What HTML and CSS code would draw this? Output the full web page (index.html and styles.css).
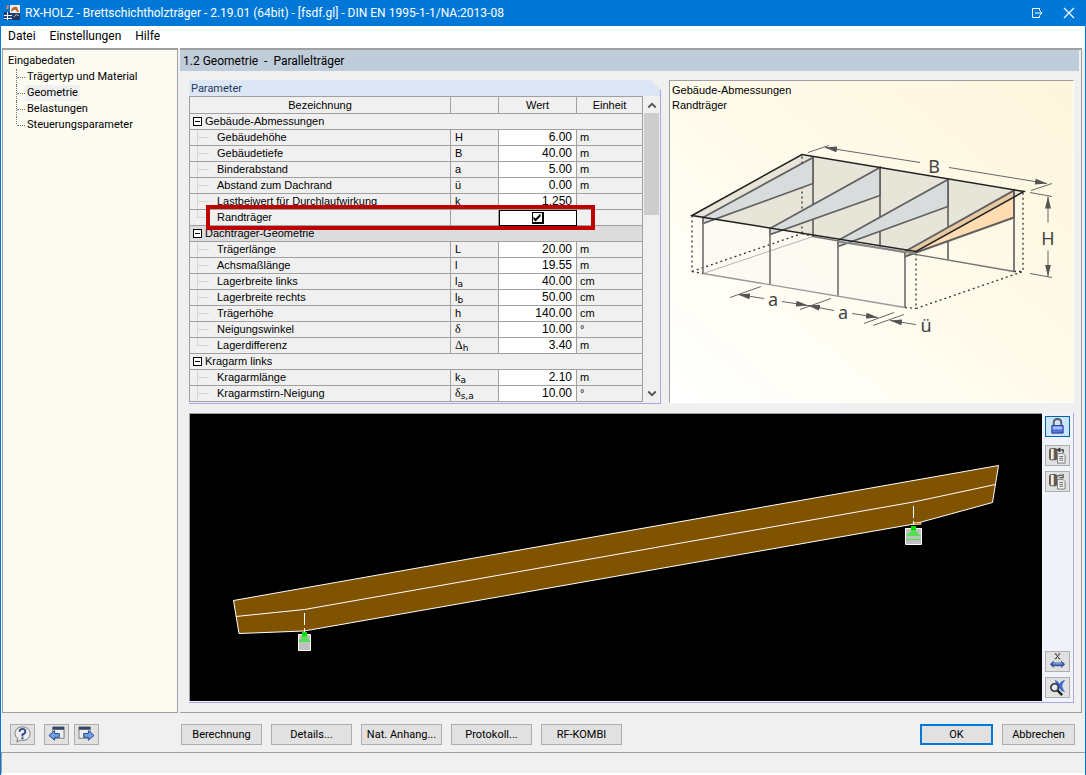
FILE: index.html
```html
<!DOCTYPE html>
<html lang="de">
<head>
<meta charset="utf-8">
<meta name="viewport" content="width=device-width, initial-scale=1">
<title>RX-HOLZ - Brettschichtholzträger</title>
<link rel="stylesheet" href="styles.css">
</head>
<body>
<div class="window">
  <header class="titlebar">
    <svg class="app-icon" viewBox="0 0 16 16" aria-hidden="true">
      <path d="M0 7h16v8H0z" fill="#1d3f78"/><path d="M6 0h10v8H6z" fill="#f6eee4"/><path d="M7 5q2-4 6-3l2 5h-2l-1-2H9L8 7z" fill="#b8663c"/>
      <path d="M2 0l3 1-1 3H2l1-2z" fill="#e38a4c"/><path d="M0 10.500h8M3.500 7v8M0 13.500h8" stroke="#fff" fill="none"/><path d="M9 9h7v6H9z" fill="#263554"/><path d="M10 12q2-4 5-1" stroke="#bdc8d8" fill="none"/>
    </svg>
    <h1 class="title">RX-HOLZ - Brettschichtholzträger - 2.19.01 (64bit) - [fsdf.gl] - DIN EN 1995-1-1/NA:2013-08</h1>
    <button class="title-button" type="button" aria-label="Andocken"><svg viewBox="0 0 12 12"><path d="M8.500 3.500v-2h-7v9h7v-2M4 6h7M9 4l2 2-2 2" fill="none" stroke="#fff"/></svg></button>
    <button class="title-button" type="button" aria-label="Schließen"><svg viewBox="0 0 12 12"><path d="M1 1l10 10M11 1L1 11" fill="none" stroke="#fff" stroke-width="1.2"/></svg></button>
  </header>
  <nav class="menubar" aria-label="Menü">
    <button type="button">Datei</button><button type="button">Einstellungen</button><button type="button">Hilfe</button>
  </nav>

  <div class="workspace">
    <nav class="sidebar" aria-label="Eingabedaten">
      <p class="tree-root">Eingabedaten</p>
      <ul class="tree">
        <li><a href="#traegertyp">Trägertyp und Material</a></li>
        <li><a href="#geometrie" class="current" aria-current="page">Geometrie</a></li>
        <li><a href="#belastungen">Belastungen</a></li>
        <li><a href="#steuerung">Steuerungsparameter</a></li>
      </ul>
    </nav>

    <main class="content" id="geometrie">
      <h2 class="page-heading">1.2 Geometrie&nbsp; -&nbsp; Parallelträger</h2>
      <div class="panels">
        <section class="parameters">
          <h3 class="panel-title">Parameter</h3>
          <div class="grid-frame">
            <table class="grid">
              <colgroup><col class="col-name"><col class="col-symbol"><col class="col-value"><col class="col-unit"></colgroup>
              <thead><tr><th scope="col">Bezeichnung</th><th scope="col" aria-label="Symbol"></th><th scope="col">Wert</th><th scope="col">Einheit</th></tr></thead>
              <tbody>
                <tr class="group"><th colspan="4" scope="rowgroup"><button class="toggle" type="button" aria-label="Gebäude-Abmessungen einklappen"></button>Gebäude-Abmessungen</th></tr>
                <tr><td>Gebäudehöhe</td><td>H</td><td>6.00</td><td>m</td></tr>
                <tr><td>Gebäudetiefe</td><td>B</td><td>40.00</td><td>m</td></tr>
                <tr><td>Binderabstand</td><td>a</td><td>5.00</td><td>m</td></tr>
                <tr><td>Abstand zum Dachrand</td><td>ü</td><td>0.00</td><td>m</td></tr>
                <tr><td>Lastbeiwert für Durchlaufwirkung</td><td>k</td><td>1.250</td><td></td></tr>
                <tr class="last"><td><label for="edge-beam">Randträger</label></td><td></td><td class="active"><input id="edge-beam" class="check" type="checkbox" checked></td><td></td></tr>
              </tbody>
              <tbody>
                <tr class="group shaded"><th colspan="4" scope="rowgroup"><button class="toggle" type="button" aria-label="Dachträger-Geometrie einklappen"></button>Dachträger-Geometrie</th></tr>
                <tr><td>Trägerlänge</td><td>L</td><td>20.00</td><td>m</td></tr>
                <tr><td>Achsmaßlänge</td><td>l</td><td>19.55</td><td>m</td></tr>
                <tr><td>Lagerbreite links</td><td>l<sub>a</sub></td><td>40.00</td><td>cm</td></tr>
                <tr><td>Lagerbreite rechts</td><td>l<sub>b</sub></td><td>50.00</td><td>cm</td></tr>
                <tr><td>Trägerhöhe</td><td>h</td><td>140.00</td><td>cm</td></tr>
                <tr><td>Neigungswinkel</td><td><span class="greek">δ</span></td><td>10.00</td><td>°</td></tr>
                <tr class="last"><td>Lagerdifferenz</td><td><span class="greek">Δ</span><sub>h</sub></td><td>3.40</td><td>m</td></tr>
              </tbody>
              <tbody>
                <tr class="group"><th colspan="4" scope="rowgroup"><button class="toggle" type="button" aria-label="Kragarm links einklappen"></button>Kragarm links</th></tr>
                <tr><td>Kragarmlänge</td><td>k<sub>a</sub></td><td>2.10</td><td>m</td></tr>
                <tr><td>Kragarmstirn-Neigung</td><td><span class="greek">δ</span><sub>s,a</sub></td><td>10.00</td><td>°</td></tr>
              </tbody>
            </table>
            <div class="scrollbar">
              <button type="button" aria-label="Nach oben"><svg viewBox="0 0 8 6"><path d="M1 5l3-3 3 3" fill="none" stroke="#555" stroke-width="1.500"/></svg></button>
              <div class="thumb"></div>
              <button type="button" aria-label="Nach unten"><svg viewBox="0 0 8 6"><path d="M1 1l3 3 3-3" fill="none" stroke="#555" stroke-width="1.500"/></svg></button>
            </div>
            <div class="highlight"></div>
          </div>
        </section>

        <section class="illustration">
          <p>Gebäude-Abmessungen<br>Randträger</p>
          <svg class="building" viewBox="670 114 403 288" role="img" aria-label="Gebäude mit den Maßen B, H, a und ü">
            <defs><marker id="tip" viewBox="0 0 12 6" refX="12" refY="3" markerWidth="12" markerHeight="6" markerUnits="userSpaceOnUse" orient="auto-start-reverse"><path d="M0 0l12 3-12 3z" fill="#555"/></marker></defs>
            <path d="M692 216L802 155 1024 192 916 252z" fill="#e7e4d8"/>
            <path d="M692 216L916 252 905 308 703 274z" fill="#faf8f2" opacity=".55"/>
            <g fill="none" stroke="#333" stroke-width="1.3" stroke-dasharray="2 3">
              <path d="M802 157V234M692 216V272M692 272L802 234M692 272L703 274M802 234L813 237"/>
              <path d="M916 254V309L1023 272V193M905 308L916 309M1014 272H1023"/>
            </g>
            <path d="M703 274L813 237" stroke="#b5b5b1" fill="none"/>
            <path d="M813 237L1014 272" stroke="#72726f" stroke-width="1.3" fill="none"/>
            <path d="M813 158V237M880 168V247M948 180V260M1014 191V272" stroke="#666" stroke-width="1.7" fill="none"/>
            <g fill="#d9dcdc" stroke="#606060" stroke-width="1.7">
              <path d="M703 218L813 158V184L703 224z"/>
              <path d="M770 229L880 168V196L770 235z"/>
              <path d="M838 241L948 180V207L838 247z"/>
            </g>
            <path d="M905 252L1014 191V218L905 257z" fill="#ffddb1"/>
            <path d="M905 252L1014 191V197L916 252z" fill="#e7caa4"/>
            <path d="M905 252L1014 191V218L905 257z" fill="none" stroke="#606060" stroke-width="2"/>
            <path d="M703 274L905 308" stroke="#999" stroke-width="1.3"/>
            <path d="M703 218V274M770 229V285M838 241V296M905 252V308" stroke="#777" stroke-width="1.7"/>
            <path d="M838 242L916 254" stroke="#888" stroke-width="2"/>
            <path d="M692 216L802 155 1024 192 916 252z" fill="none" stroke="#222" stroke-width="1.5"/>
            <g fill="none" stroke="#666" stroke-width="1">
              <path d="M808 153L829 146M1031 191L1052 184M1030 193L1052 197M1030 274L1052 278M730 298L761 287M800 310L831 299M864 324L894 313M873 326L904 315"/>
              <path d="M825 148L920 163" marker-start="url(#tip)"/><path d="M949 168L1047 184" marker-end="url(#tip)"/>
              <path d="M1048 197V223" marker-start="url(#tip)"/><path d="M1048 251V277" marker-end="url(#tip)"/>
              <path d="M738 295L764 299" marker-start="url(#tip)"/><path d="M782 302L808 306" marker-end="url(#tip)"/>
              <path d="M808 306L834 311" marker-start="url(#tip)"/><path d="M852 314L878 318" marker-end="url(#tip)"/>
              <path d="M890 321L916 325" marker-start="url(#tip)"/>
            </g>
            <g class="dimension"><text x="934" y="173">B</text><text x="1048" y="245">H</text><text x="773" y="306">a</text><text x="843" y="319">a</text><text x="926" y="332">ü</text></g>
          </svg>
        </section>
      </div>

      <section class="viewer">
        <div class="canvas">
          <svg viewBox="190 414 852 287" role="img" aria-label="Brettschichtholzträger">
            <path d="M233.500 600.500L998.500 465.500 992.500 502.500 914 524 304 631 239 633.500z" fill="#805300" stroke="#fff"/>
            <path d="M236 616.500L304.500 609.500 913.500 502 995.500 484.500" fill="none" stroke="#fff"/>
            <path d="M304.500 613V625M304.500 628V632M913.500 506V518M913.500 521V525" stroke="#fff"/>
            <path d="M914 522.500h7v2h-7z" fill="#d58a00" stroke="#fff" stroke-width=".5"/>
            <g fill="#c0c0c0" stroke="#fff"><path d="M298.500 634.500h12v16h-12zM905.500 528.500h16v16h-16z"/></g>
            <path d="M298 642l4-5v-5h5v5l4 5zM906 536l5-5v-5h5v5l5 5z" fill="#54df54"/>
            <path d="M302 632h5v4h-5zM911 526h5v4h-5z" fill="#00e000"/>
            <path d="M906 539.500h15" stroke="#54df54"/>
          </svg>
        </div>
        <div class="toolbar">
          <button class="tool selected" type="button" aria-label="Sperren"><svg viewBox="0 0 18 18"><path d="M5 8V5q0-4 4-4t4 4v3" fill="none" stroke="#535d67" stroke-width="2"/><path d="M3 8h12v8H3z" fill="#5375da" stroke="#203b93"/><path d="M4 9h10v3H4z" fill="#a8c0ff"/></svg></button>
          <button class="tool spaced" type="button" aria-label="Ansicht laden"><svg viewBox="0 0 18 18"><rect x="0" y="1" width="9" height="13" rx="3" fill="#665a50"/><path d="M2 2h3v11H2z" fill="#f2eee5"/><path d="M9 7h6l2 2v8H9z" fill="#f4f4f4" stroke="#777"/><path d="M11 10h4M11 12h4M11 14h4" stroke="#666"/><path d="M15 6V3h-5M12 1l-3 2 3 2" fill="none" stroke="#333" stroke-width="1.300"/></svg></button>
          <button class="tool" type="button" aria-label="Ansicht speichern"><svg viewBox="0 0 18 18"><rect x="0" y="1" width="9" height="13" rx="3" fill="#665a50"/><path d="M2 2h3v11H2z" fill="#f2eee5"/><path d="M9 7h6l2 2v8H9z" fill="#f4f4f4" stroke="#777"/><path d="M11 10h4M11 12h4M11 14h4" stroke="#666"/><path d="M9 4q2-3 5-1M15 1v4h-4" fill="none" stroke="#555" stroke-width="1.300"/></svg></button>
          <button class="tool bottom" type="button" aria-label="Bemaßung X"><svg viewBox="0 0 18 18"><path d="M7 1l4 5M11 1L7 6M6 1h2M10 1h2M6 6h2M10 6h2" stroke="#333" fill="none"/><path d="M1 12l4-4v2h8V8l4 4-4 4v-2H5v2z" fill="#35549f"/><path d="M4 11.500h10" stroke="#a3c0ff"/></svg></button>
          <button class="tool" type="button" aria-label="Alles zeigen"><svg viewBox="0 0 18 18"><path d="M6 1q4 1 5 4 3-4 6-4-3 4-3 7 1 3 3 6-4-1-6-4-2 3-5 2 2-3 2-5-1-3-2-6z" fill="#416bd0"/><circle cx="6" cy="9" r="4" fill="#e8f0fa" fill-opacity=".8" stroke="#333" stroke-width="1.700"/><path d="M9 12l5 5" stroke="#222" stroke-width="2.500"/></svg></button>
        </div>
      </section>
    </main>
  </div>

  <footer class="actions">
    <div class="icon-actions">
      <button class="tool help" type="button" aria-label="Hilfe"><svg viewBox="0 0 18 18"><path d="M9 1C4 1 1 4 1 8q0 4 3 5l-1 4 4-2c6 1 10-2 10-7 0-4-3-7-8-7z" fill="#eee" stroke="#777"/><path d="M6 6q0-3 3-3t3 3q0 2-3 3v2M9 12v2" fill="none" stroke="#334c89" stroke-width="2"/></svg></button>
      <button class="tool" type="button" aria-label="Zurück"><svg viewBox="0 0 18 18"><path d="M5 1h12v12H5z" fill="#eee" stroke="#777"/><path d="M5 1h12v3H5z" fill="#344767"/><path d="M1 10l6-5v3h5v4H7v3z" fill="#6fa0ec" stroke="#234582"/></svg></button>
      <button class="tool" type="button" aria-label="Weiter"><svg viewBox="0 0 18 18"><path d="M1 1h12v12H1z" fill="#eee" stroke="#777"/><path d="M1 1h12v3H1z" fill="#344767"/><path d="M17 10l-6-5v3H6v4h5v3z" fill="#6fa0ec" stroke="#234582"/></svg></button>
    </div>
    <div class="buttons">
      <button class="button" type="button">Berechnung</button><button class="button" type="button">Details...</button><button class="button" type="button">Nat. Anhang...</button><button class="button" type="button">Protokoll...</button><button class="button" type="button">RF-KOMBI</button>
    </div>
    <div class="buttons confirm"><button class="button primary" type="button">OK</button><button class="button" type="button">Abbrechen</button></div>
  </footer>
  <div class="statusbar"></div>
</div>
</body>
</html>
```
FILE: styles.css
```css
* { box-sizing: border-box; }
body { margin: 0; color: #000; font: 11px/16px Roboto, sans-serif; }
h1, h2, h3, p, ul { margin: 0; padding: 0; font-size: inherit; font-weight: 400; }
button { margin: 0; padding: 0; border: 0; background: none; color: inherit; font: inherit; }
svg { display: block; }

.window { display: flex; flex-direction: column; min-height: 100vh; border: 1px solid #0078d7; border-top: 0; background: #f0f0f0; }
.titlebar { display: flex; align-items: center; height: 26px; padding-left: 3px; background: #0078d7; color: #fff; }
.app-icon { width: 16px; height: 16px; margin-right: 5px; }
.title { flex: 1; font-size: 12px; white-space: nowrap; }
.title-button { display: flex; justify-content: center; width: 32px; }
.title-button svg { width: 12px; height: 12px; }
.menubar { display: flex; gap: 14px; height: 22px; padding: 0 0 2px 7px; background: #fff; font-size: 12px; }

.workspace { display: flex; flex: 1; gap: 2px; padding: 0 3px 0 1px; }
.sidebar { width: 176px; padding: 3px 0 0 5px; background: #fcfbf2; border: 1px solid #a0a0a0; border-width: 2px 1px 1px; }
.tree { list-style: none; padding-left: 8px; }
.tree li { display: flex; align-items: center; height: 16px; border-left: 1px dotted #777; }
.tree li:last-child { border-left-color: transparent; background: repeating-linear-gradient(#777 0 1px, transparent 1px 2px) left top / 1px 8px no-repeat border-box; }
.tree li::before { content: ""; width: 8px; border-top: 1px dotted #777; }
.tree a { padding: 0 2px; color: #000; text-decoration: none; line-height: 16px; }
.tree .current { background: #f0f0f0; }

.content { display: flex; flex: 1; flex-direction: column; min-width: 0; padding: 0 2px 9px 0; border: 1px solid #a0a0a0; border-width: 2px 1px 1px 0; }
.page-heading { height: 21px; padding: 3px 0 0 3px; background: #bfccd9; font-size: 12px; line-height: 17px; }
.panels { display: flex; gap: 8px; padding: 9px 5px 0 9px; }
.parameters { width: 472px; border: 1px solid #a8a8e8; border-width: 0 1px 1px 0; clip-path: polygon(0 0, 462px 0, 100% 10px, 100% 100%, 0 100%); }
.panel-title { height: 16px; padding-left: 2px; background: #dce6f4; color: #1e395b; line-height: 17px; }
.grid-frame { display: flex; position: relative; padding-bottom: 1px; }
.grid { width: 454px; table-layout: fixed; border-collapse: collapse; font-family: "Liberation Sans", sans-serif; }
.col-symbol { width: 48px; }
.col-value { width: 78px; }
.col-unit { width: 66px; }
.grid th, .grid td { height: 16px; padding: 0 3px; border: 1px solid #a0a0a0; font-weight: 400; line-height: 15px; white-space: nowrap; }
.grid thead th { height: 17px; line-height: 16px; }
.grid .group th { padding: 0 0 0 3px; text-align: left; }
.grid .shaded th { background: #dcdcdc; }
.grid td:first-child { padding-left: 27px; background: linear-gradient(#d5d5d5, #d5d5d5) 7px 50% / 12px 1px no-repeat, linear-gradient(#d5d5d5, #d5d5d5) 7px 0 / 1px 100% no-repeat; }
.grid .last td:first-child { background-size: 12px 1px, 1px 8px; }
.grid td:nth-child(2) { padding-left: 4px; }
.grid td:nth-child(3) { padding-right: 4px; background: #fff; text-align: right; font-size: 12px; }
.grid .active { outline: 1px solid #000; outline-offset: -1px; }
.grid td.active:nth-child(3) { padding: 0; text-align: center; }
.grid sub { font-family: "DejaVu Sans", sans-serif; font-size: 9px; line-height: 8px; vertical-align: -2px; }
.greek { font-family: "Liberation Serif", serif; font-size: 12px; line-height: 12px; }
.toggle { width: 9px; height: 9px; margin-right: 3px; border: 1px solid #000; background: linear-gradient(#000, #000) center / 5px 1px no-repeat #fff; vertical-align: 0; }
.check { appearance: none; display: block; width: 12px; height: 12px; margin: 0 auto; border: 1px solid #000; border-width: 1px 2px 2px 1px; background: #fff; }
.check:checked::before { content: ""; display: block; width: 9px; height: 9px; background: #000; clip-path: polygon(1px 4px, 3px 6px, 8px 1px, 8px 4px, 3px 9px, 1px 7px); }
.scrollbar { display: flex; flex-direction: column; flex: 1; padding: 0 1px; }
.scrollbar button { display: flex; align-items: center; justify-content: center; height: 17px; }
.scrollbar svg { width: 10px; height: 8px; }
.thumb { height: 102px; margin-bottom: auto; background: #cdcdcd; }
.highlight { position: absolute; top: 109px; left: 17px; width: 389px; height: 25px; border: 4px solid #c00000; pointer-events: none; }

.illustration { display: flex; flex: 1; flex-direction: column; min-width: 0; margin-bottom: 1px; border: 1px solid #a0a0a0; border-right-color: #fff; border-bottom-color: #fff; background: linear-gradient(to top right, #fff, #fffbeb 50%, #fdf5dc); font-family: "Liberation Sans", sans-serif; }
.illustration p { padding: 2px 2px 0; line-height: 15px; }
.building { flex: 1; width: 100%; min-height: 0; }
.dimension text { fill: #444; font: 18px "Noto Sans", sans-serif; text-anchor: middle; }

.viewer { display: flex; flex: 1; margin: 9px 5px 0 9px; border: 1px solid #a8a8e8; border-width: 0 1px 1px 0; background: #f0f4fa; }
.canvas { display: flex; flex: 1; min-width: 0; border: 1px solid #a0a0a0; border-width: 1px 0 0 1px; margin-bottom: 1px; background: #000; }
.canvas svg { width: 100%; }
.toolbar { display: flex; flex-direction: column; gap: 5px; padding: 3px 3px 4px; }
.tool { display: flex; align-items: center; justify-content: center; width: 25px; height: 21px; border: 1px solid #adadad; background: #e1e1e1; }
.tool svg { flex: none; width: 17px; height: 17px; }
.selected { border-color: #0062ad; background: #cce4f7; }
.spaced { margin-top: 3px; }
.bottom { margin-top: auto; }

.actions { display: flex; align-items: center; height: 39px; padding: 4px 10px 0 9px; }
.icon-actions { display: flex; gap: 5px; width: 171px; }
.help { margin-right: 4px; }
.buttons { display: flex; gap: 9px; }
.button { width: 81px; height: 21px; border: 1px solid #adadad; background: #e1e1e1; line-height: 19px; }
.confirm { margin-left: auto; }
.confirm .button { width: 73px; }
.primary { border: 2px solid #0078d7; line-height: 17px; }
.statusbar { height: 23px; border-top: 1px solid #a0a0a0; border-left: 1px solid #a0a0a0; border-bottom: 2px solid #fff; }
```
